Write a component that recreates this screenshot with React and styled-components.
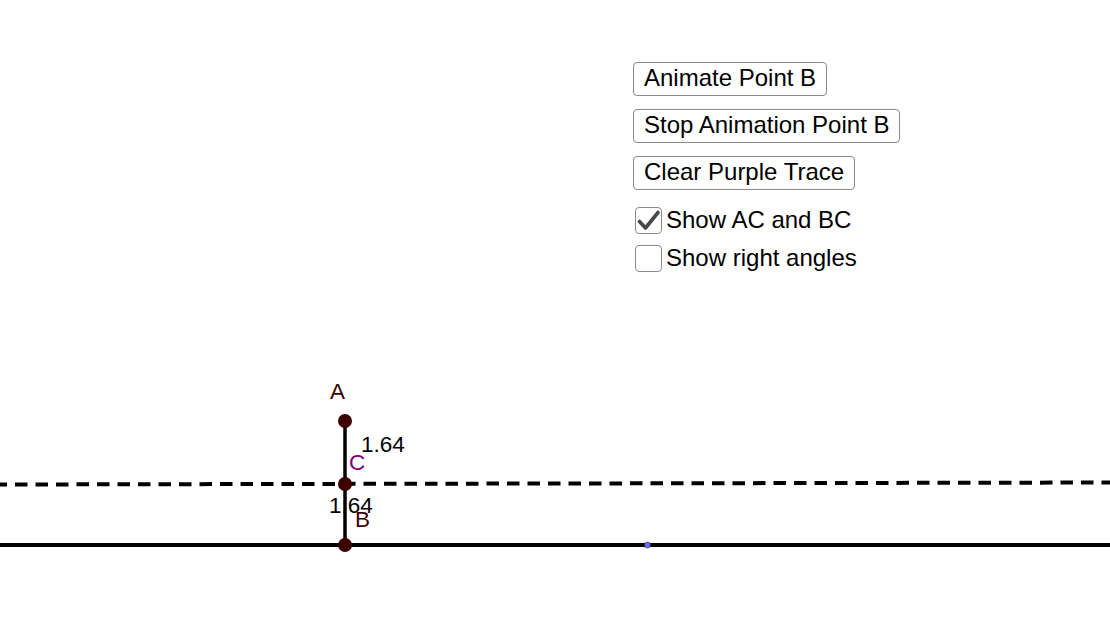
import React, { useState } from "react";
import styled, { createGlobalStyle } from "styled-components";

const Global = createGlobalStyle`
  html, body { margin: 0; padding: 0; background: #fff; }
  body { font-family: "Liberation Sans", Arial, sans-serif; }
`;

const Stage = styled.div`
  position: relative;
  width: 1110px;
  height: 643px;
  overflow: hidden;
  background: #fff;
`;

const Canvas = styled.svg`
  position: absolute;
  inset: 0;
  width: 1110px;
  height: 643px;
`;

const Label = styled.text`
  font-family: "Liberation Sans", Arial, sans-serif;
  font-size: 22.5px;
  fill: ${(p) => p.$color || "#000"};
`;

const Controls = styled.div`
  position: absolute;
  left: 633px;
  top: 62px;
  display: flex;
  flex-direction: column;
  align-items: flex-start;
  gap: 13px;
`;

const Button = styled.button`
  box-sizing: border-box;
  height: 34px;
  padding: 0 10px 2px;
  margin: 0;
  border: 1px solid #8a8a8a;
  border-radius: 4px;
  background: #fff;
  color: #000;
  font-family: "Liberation Sans", Arial, sans-serif;
  font-size: 24px;
  line-height: 30px;
  white-space: nowrap;
  cursor: pointer;
`;

const Checks = styled.div`
  display: flex;
  flex-direction: column;
  gap: 12px;
  margin-top: 4px;
  padding-left: 2px;
`;

const CheckRow = styled.label`
  display: flex;
  align-items: center;
  gap: 4px;
  height: 26px;
  font-size: 24px;
  line-height: 26px;
  color: #000;
  cursor: pointer;
  white-space: nowrap;
`;

const Box = styled.span`
  box-sizing: border-box;
  width: 27px;
  height: 27px;
  border: 1px solid #8a8a8a;
  border-radius: 4px;
  background: #fff;
  display: flex;
  align-items: center;
  justify-content: center;
`;

function Check({ checked, label, onToggle }) {
  return (
    <CheckRow onClick={onToggle}>
      <Box>
        {checked && (
          <svg width="25" height="25" viewBox="0 0 25 25">
            <path
              d="M3.5 13.5 L9.5 20 L22 4.5"
              fill="none"
              stroke="#474747"
              strokeWidth="3.6"
              strokeLinecap="round"
              strokeLinejoin="round"
            />
          </svg>
        )}
      </Box>
      <span>{label}</span>
    </CheckRow>
  );
}

const PT = "#3d0000";

export default function App() {
  const [ac, setAc] = useState(true);
  const [ra, setRa] = useState(false);
  return (
    <Stage>
      <Global />
      <Canvas viewBox="0 0 1110 643">
        <line x1="0" y1="484.5" x2="1110" y2="482.5" stroke="#000" strokeWidth="4" strokeDasharray="12.5 8" strokeDashoffset="5.5" />
        <line x1="0" y1="545" x2="1110" y2="545" stroke="#000" strokeWidth="4" />
        <line x1="345" y1="421" x2="345" y2="545" stroke="#000" strokeWidth="3.5" />
        <circle cx="345" cy="421" r="7" fill={PT} />
        <circle cx="345" cy="484" r="7" fill={PT} />
        <circle cx="345" cy="545" r="7" fill={PT} />
        <circle cx="647.5" cy="545" r="3" fill="#6b6bff" stroke="#333" strokeWidth="0.6" />
        <Label x="330" y="399" $color={PT}>A</Label>
        <Label x="361" y="452">1.64</Label>
        <Label x="349" y="470" $color="#800080">C</Label>
        <Label x="329" y="513">1.64</Label>
        <Label x="355" y="527" $color={PT}>B</Label>
      </Canvas>
      <Controls>
        <Button>Animate Point B</Button>
        <Button>Stop Animation Point B</Button>
        <Button>Clear Purple Trace</Button>
        <Checks>
          <Check checked={ac} label="Show AC and BC" onToggle={() => setAc(!ac)} />
          <Check checked={ra} label="Show right angles" onToggle={() => setRa(!ra)} />
        </Checks>
      </Controls>
    </Stage>
  );
}
